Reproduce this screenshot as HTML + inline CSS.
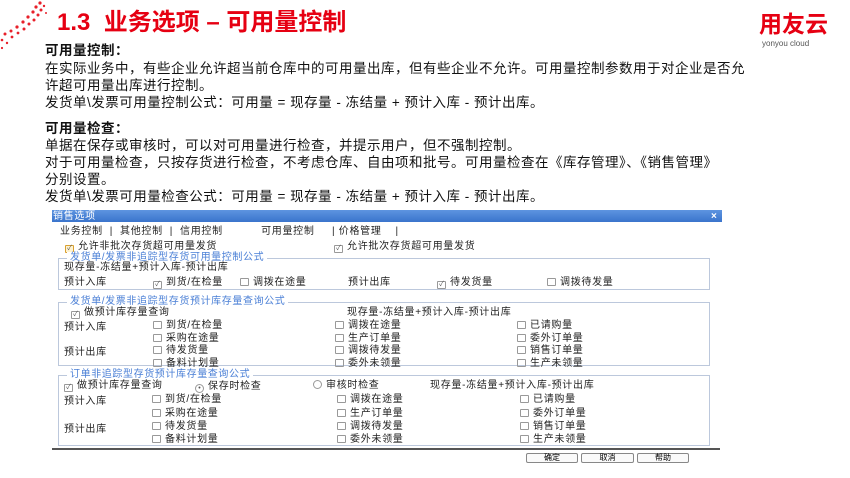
<!DOCTYPE html><html><head><meta charset="utf-8"><style>
*{margin:0;padding:0;box-sizing:border-box}
body{width:850px;height:478px;background:#fff;position:relative;overflow:hidden;font-family:"Liberation Sans","Noto Sans CJK SC",sans-serif}
.a{position:absolute;white-space:nowrap}
.t{font-size:13.5px;color:#111;line-height:16px;letter-spacing:0.5px}
.d{font-size:10px;color:#222;line-height:11px;letter-spacing:0.7px}
.cb{display:inline-block;width:9px;height:8px;border:1px solid #999;border-radius:1px;margin-right:4px;vertical-align:-1px;font-size:7px;line-height:6px;text-align:center;color:#555;letter-spacing:0}
.g{position:absolute;border:1px solid #bcc8dc}
.gt{position:absolute;top:-7px;left:8px;background:#fff;color:#4a7fd6;font-size:10px;line-height:11px;padding:0 3px;letter-spacing:0.6px}
.btn{position:absolute;top:453px;height:10px;border:1px solid #888;border-radius:2px;font-size:8px;line-height:8px;text-align:center;background:#fafafa}
</style></head><body>
<svg class="a" style="left:0;top:0" width="50" height="50">
<g fill="#e8202a">
<circle cx="40" cy="3" r="1.6"/><circle cx="36" cy="7" r="1.6"/><circle cx="41" cy="10" r="1.5"/><circle cx="33" cy="12" r="1.6"/><circle cx="38" cy="15" r="1.5"/><circle cx="28" cy="17" r="1.6"/><circle cx="34" cy="20" r="1.5"/><circle cx="23" cy="22" r="1.6"/><circle cx="29" cy="24" r="1.5"/><circle cx="17" cy="27" r="1.6"/><circle cx="24" cy="29" r="1.5"/><circle cx="11" cy="31" r="1.5"/><circle cx="18" cy="33" r="1.4"/><circle cx="5" cy="34" r="1.5"/><circle cx="12" cy="37" r="1.4"/><circle cx="2" cy="40" r="1.3"/><circle cx="7" cy="43" r="1.2"/><circle cx="2" cy="48" r="1.1"/><circle cx="44" cy="6" r="1.2"/><circle cx="46" cy="13" r="1"/>
</g></svg>
<div class="a" style="left:57px;top:8px;font-size:24px;font-weight:bold;color:#e60012;line-height:30px">1.3&nbsp; 业务选项 – 可用量控制</div>
<div class="a" style="left:759px;top:12px;font-size:23px;font-weight:bold;color:#e60012;line-height:24px">用友云</div>
<div class="a" style="left:762px;top:39px;font-size:8px;color:#555">yonyou cloud</div>
<div class="a t" style="left:45px;top:43px;font-weight:bold">可用量控制：</div>
<div class="a t" style="left:45px;top:61px">在实际业务中，有些企业允许超当前仓库中的可用量出库，但有些企业不允许。可用量控制参数用于对企业是否允</div>
<div class="a t" style="left:45px;top:78px">许超可用量出库进行控制。</div>
<div class="a t" style="left:45px;top:95px">发货单\发票可用量控制公式：可用量 = 现存量 - 冻结量 + 预计入库 - 预计出库。</div>
<div class="a t" style="left:45px;top:121px;font-weight:bold">可用量检查：</div>
<div class="a t" style="left:45px;top:138px">单据在保存或审核时，可以对可用量进行检查，并提示用户，但不强制控制。</div>
<div class="a t" style="left:45px;top:155px">对于可用量检查，只按存货进行检查，不考虑仓库、自由项和批号。可用量检查在《库存管理》、《销售管理》</div>
<div class="a t" style="left:45px;top:172px">分别设置。</div>
<div class="a t" style="left:45px;top:189px">发货单\发票可用量检查公式：可用量 = 现存量 - 冻结量 + 预计入库 - 预计出库。</div>

<div class="a" style="left:52px;top:210px;width:670px;height:12px;background:linear-gradient(#5d94e0,#3a74cc)"></div>
<div class="a d" style="left:53px;top:211px;color:#fff">销售选项</div>
<div class="a d" style="left:711px;top:211px;color:#fff;font-weight:bold">×</div>
<div class="a d" style="left:60px;top:226px">业务控制 &nbsp;| &nbsp;其他控制 &nbsp;| &nbsp;信用控制 &nbsp; &nbsp; &nbsp; &nbsp; &nbsp; 可用量控制 &nbsp; &nbsp; | 价格管理 &nbsp; &nbsp;|</div>
<div class="a d" style="left:65px;top:241px"><span class="cb" style="border-color:#d9a030;background:#fff3d0">✓</span>允许非批次存货超可用量发货</div>
<div class="a d" style="left:334px;top:241px"><span class="cb">✓</span>允许批次存货超可用量发货</div>

<div class="g" style="left:58px;top:258px;width:652px;height:32px"><div class="gt">发货单/发票非追踪型存货可用量控制公式</div></div>
<div class="a d" style="left:64px;top:262px">现存量-冻结量+预计入库-预计出库</div>
<div class="a d" style="left:64px;top:277px">预计入库</div>
<div class="a d" style="left:153px;top:277px"><span class="cb">✓</span>到货/在检量</div>
<div class="a d" style="left:240px;top:277px"><span class="cb"></span>调拨在途量</div>
<div class="a d" style="left:348px;top:277px">预计出库</div>
<div class="a d" style="left:437px;top:277px"><span class="cb">✓</span>待发货量</div>
<div class="a d" style="left:547px;top:277px"><span class="cb"></span>调拨待发量</div>

<div class="g" style="left:58px;top:302px;width:652px;height:64px"><div class="gt">发货单/发票非追踪型存货预计库存量查询公式</div></div>
<div class="a d" style="left:71px;top:307px"><span class="cb">✓</span>做预计库存量查询</div>
<div class="a d" style="left:347px;top:307px">现存量-冻结量+预计入库-预计出库</div>
<div class="a d" style="left:64px;top:322px">预计入库</div>
<div class="a d" style="left:64px;top:347px">预计出库</div>
<div class="a d" style="left:153px;top:320px"><span class="cb"></span>到货/在检量</div>
<div class="a d" style="left:153px;top:333px"><span class="cb"></span>采购在途量</div>
<div class="a d" style="left:153px;top:345px"><span class="cb"></span>待发货量</div>
<div class="a d" style="left:153px;top:358px"><span class="cb"></span>备料计划量</div>
<div class="a d" style="left:335px;top:320px"><span class="cb"></span>调拨在途量</div>
<div class="a d" style="left:335px;top:333px"><span class="cb"></span>生产订单量</div>
<div class="a d" style="left:335px;top:345px"><span class="cb"></span>调拨待发量</div>
<div class="a d" style="left:335px;top:358px"><span class="cb"></span>委外未领量</div>
<div class="a d" style="left:517px;top:320px"><span class="cb"></span>已请购量</div>
<div class="a d" style="left:517px;top:333px"><span class="cb"></span>委外订单量</div>
<div class="a d" style="left:517px;top:345px"><span class="cb"></span>销售订单量</div>
<div class="a d" style="left:517px;top:358px"><span class="cb"></span>生产未领量</div>

<div class="g" style="left:58px;top:375px;width:652px;height:71px"><div class="gt">订单非追踪型存货预计库存量查询公式</div></div>
<div class="a d" style="left:64px;top:380px"><span class="cb">✓</span>做预计库存量查询</div>
<div class="a d" style="left:195px;top:381px"><span class="cb" style="border-radius:50%;width:9px;height:9px;line-height:7px">•</span>保存时检查</div>
<div class="a d" style="left:313px;top:380px"><span class="cb" style="border-radius:50%;width:9px;height:9px"></span>审核时检查</div>
<div class="a d" style="left:430px;top:380px">现存量-冻结量+预计入库-预计出库</div>
<div class="a d" style="left:64px;top:396px">预计入库</div>
<div class="a d" style="left:64px;top:424px">预计出库</div>
<div class="a d" style="left:152px;top:394px"><span class="cb"></span>到货/在检量</div>
<div class="a d" style="left:152px;top:408px"><span class="cb"></span>采购在途量</div>
<div class="a d" style="left:152px;top:421px"><span class="cb"></span>待发货量</div>
<div class="a d" style="left:152px;top:434px"><span class="cb"></span>备料计划量</div>
<div class="a d" style="left:337px;top:394px"><span class="cb"></span>调拨在途量</div>
<div class="a d" style="left:337px;top:408px"><span class="cb"></span>生产订单量</div>
<div class="a d" style="left:337px;top:421px"><span class="cb"></span>调拨待发量</div>
<div class="a d" style="left:337px;top:434px"><span class="cb"></span>委外未领量</div>
<div class="a d" style="left:520px;top:394px"><span class="cb"></span>已请购量</div>
<div class="a d" style="left:520px;top:408px"><span class="cb"></span>委外订单量</div>
<div class="a d" style="left:520px;top:421px"><span class="cb"></span>销售订单量</div>
<div class="a d" style="left:520px;top:434px"><span class="cb"></span>生产未领量</div>
<div class="a" style="left:52px;top:448px;width:668px;height:2px;background:#555"></div>
<div class="btn" style="left:526px;width:52px">确定</div>
<div class="btn" style="left:581px;width:53px">取消</div>
<div class="btn" style="left:637px;width:52px">帮助</div>
</body></html>
